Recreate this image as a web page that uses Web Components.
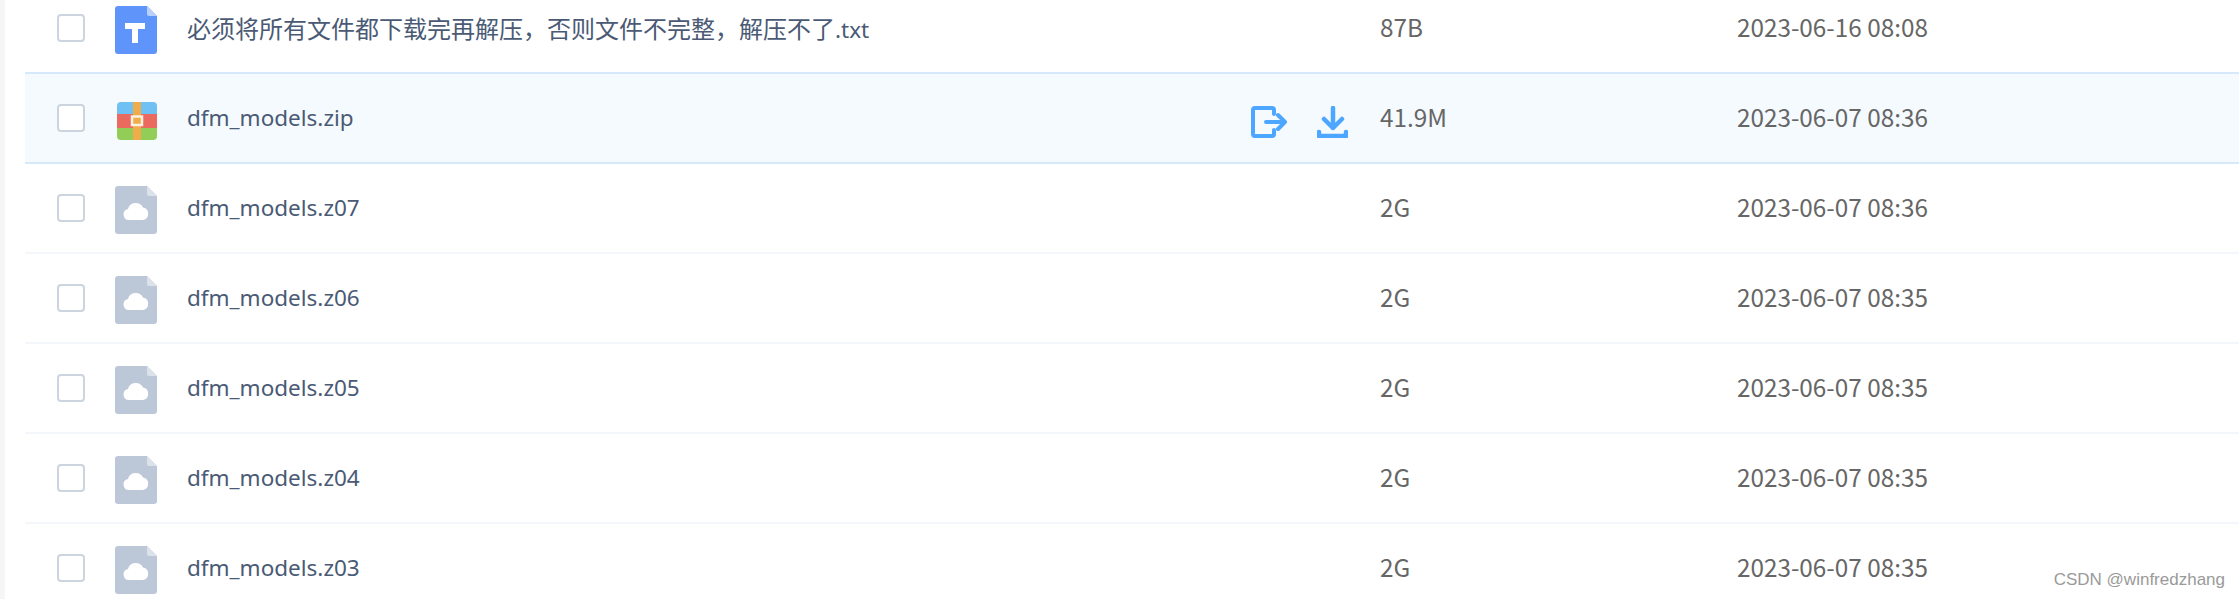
<!DOCTYPE html>
<html>
<head>
<meta charset="utf-8">
<style>
  html, body { margin: 0; height: 100%; background: #fff; overflow: hidden; }
  body { font-family: "Noto Sans", "Noto Sans CJK SC", sans-serif; }
  .cjk { font-size: 24px; font-family: "Noto Sans CJK SC", sans-serif; }
</style>
</head>
<body>
<file-page>
  <file-row type="txt" size="87B" date="2023-06-16 08:08"><span class="cjk">必须将所有文件都下载完再解压，否则文件不完整，解压不了</span>.txt</file-row>
  <file-row type="zip" size="41.9M" date="2023-06-07 08:36" hover>dfm_models.zip</file-row>
  <file-row type="cloud" size="2G" date="2023-06-07 08:36">dfm_models.z07</file-row>
  <file-row type="cloud" size="2G" date="2023-06-07 08:35">dfm_models.z06</file-row>
  <file-row type="cloud" size="2G" date="2023-06-07 08:35">dfm_models.z05</file-row>
  <file-row type="cloud" size="2G" date="2023-06-07 08:35">dfm_models.z04</file-row>
  <file-row type="cloud" size="2G" date="2023-06-07 08:35">dfm_models.z03</file-row>
</file-page>
<script>
// Page shell: grey strip on the left, rows scrolled a little past the top
class FilePage extends HTMLElement {
  constructor() {
    super();
    this.attachShadow({ mode: 'open' });
    this.shadowRoot.innerHTML = `
      <style>
        :host {
          display: block;
          height: 599px;
          position: relative;
          overflow: hidden;
          border-left: 5px solid #f6f6f6;
          padding-left: 20px;
        }
        .list { margin-top: -16px; }
        .mark {
          position: absolute;
          right: 14px;
          bottom: 9px;
          font: 17px/20px "Liberation Sans", sans-serif;
          color: #9a9a9a;
        }
      </style>
      <div class="list"><slot></slot></div>
      <div class="mark">CSDN @winfredzhang</div>
    `;
  }
}

// File type icon
class FileIcon extends HTMLElement {
  constructor() {
    super();
    this.attachShadow({ mode: 'open' });
  }

  connectedCallback() {
    const sheet = (color, fold, inner) => `
      <svg width="42" height="48" viewBox="0 0 42 48">
        <path d="M3 0H32L42 10V45a3 3 0 0 1-3 3H3a3 3 0 0 1-3-3V3a3 3 0 0 1 3-3Z" fill="${color}"/>
        <path d="M32 0L42 10H34a2 2 0 0 1-2-2Z" fill="${fold}"/>
        ${inner}
      </svg>`;
    const icons = {
      txt: sheet('#5f95fb', '#b9d0fb', '<path d="M10 17H30V23H23V37H17V23H10Z" fill="#fff"/>'),
      cloud: sheet('#bcc8d7', '#dbe2ea', '<path d="M15 34a5.500 5.500 0 0 1-1-10.900a8 8 0 0 1 15 -1.500a6.300 6.300 0 0 1 0 12.400Z" fill="#fff" transform="translate(-1 0)"/>'),
      zip: `
      <svg width="42" height="48" viewBox="0 0 42 48">
        <g transform="translate(2 6)">
          <path d="M4 0H36a4 4 0 0 1 4 4V12H0V4a4 4 0 0 1 4-4Z" fill="#6ec1f2"/>
          <rect y="12" width="40" height="14" fill="#ea6a60"/>
          <path d="M0 26H40V34a4 4 0 0 1-4 4H4a4 4 0 0 1-4-4Z" fill="#92cd58"/>
          <rect x="16" width="8" height="38" fill="#f0ac4b"/>
          <rect x="15" y="14.500" width="10" height="8.500" fill="#f0ac4b" stroke="#fdf1e0" stroke-width="2.500"/>
        </g>
      </svg>`
    };
    this.shadowRoot.innerHTML = `
      <style>
        :host { display: block; width: 42px; height: 48px; }
        svg { display: block; }
      </style>
      ${icons[this.getAttribute('type')] || ''}
    `;
  }
}

// One row of the file table
class FileRow extends HTMLElement {
  constructor() {
    super();
    this.attachShadow({ mode: 'open' });
  }

  connectedCallback() {
    const hover = this.hasAttribute('hover');
    this.shadowRoot.innerHTML = `
      <style>
        :host {
          display: grid;
          grid-template-columns: 90px 72px 1193px 357px 1fr;
          align-items: center;
          box-sizing: border-box;
          height: 90px;
          border-bottom: 2px solid #f3f6fa;
          font-size: 22.500px;
          color: #4a5a75;
        }
        :host([hover]) {
          background: #f5faff;
          border-bottom-color: #d6e9fb;
          box-shadow: 0 -2px 0 #d6e9fb;
        }
        .check {
          box-sizing: border-box;
          width: 28px;
          height: 28px;
          margin-left: 32px;
          background: #fff;
          border: 2px solid #ccd4df;
          border-radius: 4px;
        }
        file-icon { margin-top: 4px; }
        .name {
          display: flex;
          align-items: center;
          padding-right: 32px;
          white-space: nowrap;
        }
        .name > span { margin-bottom: 2px; }
        .actions { display: flex; margin-left: auto; gap: 29px; margin-top: 8px; }
        .actions svg { display: block; }
        .size, .date {
          color: #666;
          font-family: "Noto Sans CJK SC", sans-serif;
          font-size: 24.300px;
          margin-bottom: 3px;
        }
      </style>
      <div class="check"></div>
      <file-icon type="${this.getAttribute('type')}"></file-icon>
      <div class="name">
        <span><slot></slot></span>
        ${hover ? `
        <div class="actions">
          <svg width="37" height="32" viewBox="0 0 37 32" fill="none" stroke="#4da6ff" stroke-width="4" stroke-linecap="round" stroke-linejoin="round">
            <path d="M23 8V4a2 2 0 0 0-2-2H4a2 2 0 0 0-2 2V28a2 2 0 0 0 2 2H21a2 2 0 0 0 2-2V24"/>
            <path d="M15 16H34M27 9L34 16L27 23"/>
          </svg>
          <svg width="31" height="32" viewBox="0 0 31 32" fill="none" stroke="#4da6ff" stroke-width="4.500" stroke-linecap="round" stroke-linejoin="round">
            <path d="M16 2V22M7 13L16 22L25 13"/>
            <path d="M2 26V30H29V26"/>
          </svg>
        </div>` : ''}
      </div>
      <div class="size">${this.getAttribute('size')}</div>
      <div class="date">${this.getAttribute('date')}</div>
    `;
  }
}

customElements.define('file-page', FilePage);
customElements.define('file-icon', FileIcon);
customElements.define('file-row', FileRow);
</script>
</body>
</html>
